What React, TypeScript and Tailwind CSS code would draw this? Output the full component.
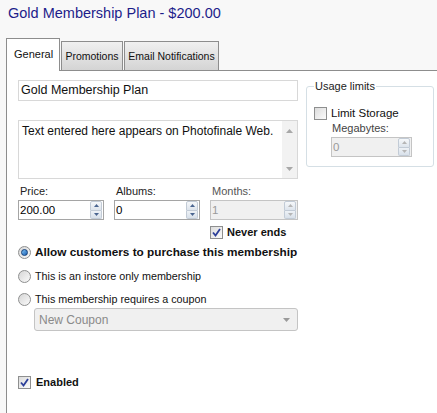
import React from 'react';

const FONT = { fontFamily: '"Liberation Sans", Arial, sans-serif' };

function Spinner({ disabled }: { disabled?: boolean }) {
  const arrow = disabled ? '#b5b5b5' : '#4a6590';
  return (
    <div className="flex flex-col w-[12px] h-[18px] mr-px">
      <div className="flex-1 flex items-center justify-center border border-[#c2cbd6] bg-gradient-to-b from-[#f6f8fa] to-[#dde4ec] rounded-t-[2px]">
        <svg width="5" height="3" viewBox="0 0 5 3"><path d="M0 3L2.5 0L5 3Z" fill={arrow} /></svg>
      </div>
      <div className="flex-1 flex items-center justify-center border border-t-0 border-[#c2cbd6] bg-gradient-to-b from-[#eef2f6] to-[#d8e0ea] rounded-b-[2px]">
        <svg width="5" height="3" viewBox="0 0 5 3"><path d="M0 0L2.5 3L5 0Z" fill={arrow} /></svg>
      </div>
    </div>
  );
}

function NumberBox({ value, width, disabled }: { value: string; width: string; disabled?: boolean }) {
  return (
    <div
      className={`flex items-center h-[20px] border ${width} ${
        disabled ? 'bg-[#f0f0f0] border-[#c4c4c4] text-[#9a9a9a]' : 'bg-white border-[#a5a5a5] text-black'
      }`}
    >
      <span className="flex-1 pl-[1px] text-[11.5px] leading-[14px]">{value}</span>
      <Spinner disabled={disabled} />
    </div>
  );
}

function Checkbox({ checked }: { checked?: boolean }) {
  return (
    <span className="flex items-center justify-center w-[13px] h-[13px] border border-[#8e8f8f] bg-gradient-to-br from-[#dcdcdc] to-[#fbfbfb] shrink-0">
      {checked && (
        <svg width="9" height="9" viewBox="0 0 9 9">
          <path d="M1 4.5L3.5 7.5L8 1" stroke="#2c3f99" strokeWidth="1.8" fill="none" />
        </svg>
      )}
    </span>
  );
}

function Radio({ checked }: { checked?: boolean }) {
  return (
    <span className="flex items-center justify-center w-[13px] h-[13px] rounded-full border border-[#8e8f8f] bg-gradient-to-br from-[#d6d6d6] to-[#fafafa] shrink-0">
      {checked && (
        <span className="w-[7px] h-[7px] rounded-full bg-gradient-to-br from-[#7fc3f3] to-[#1a5fb4] border border-[#123f7a]" />
      )}
    </span>
  );
}

export default function App() {
  return (
    <div className="w-[437px] h-[413px] bg-[#f8f8f8] overflow-hidden flex flex-col text-[#111]" style={FONT}>
      <h1 className="pl-[8px] pt-[4px] text-[14.5px] leading-[19px] text-[#1d1d8a]">Gold Membership Plan - $200.00</h1>

      <div className="flex items-end ml-[6px] mt-[15px] -mb-px relative z-10 text-[10.5px] leading-[13px]">
        <div className="w-[54px] h-[33px] bg-white border border-b-0 border-[#8d8d8d] pt-[9px] pl-[7px] text-[11px]">
          General
        </div>
        <div className="w-[62px] h-[30px] ml-px border border-[#8d8d8d] bg-gradient-to-b from-[#f0f0f0] to-[#d4d4d4] flex items-center justify-center">
          Promotions
        </div>
        <div className="w-[95px] h-[30px] ml-px border border-[#8d8d8d] bg-gradient-to-b from-[#f0f0f0] to-[#d4d4d4] flex items-center justify-center">
          Email Notifications
        </div>
      </div>

      <div className="flex-1 bg-white border-t border-l border-[#8d8d8d] ml-[6px] pl-[11px] pt-[9px] flex items-start gap-[8px]">
        <div className="w-[280px] flex flex-col">
          <div className="h-[21px] border border-[#d8d8d8] flex items-center pl-[2px] text-[12.5px]">Gold Membership Plan</div>

          <div className="mt-[19px] h-[59px] border border-[#d8d8d8] flex">
            <div className="flex-1 pl-[3px] pt-[3px] text-[12px] leading-[15px] whitespace-nowrap">Text entered here appears on Photofinale Web.</div>
            <div className="w-[15px] bg-[#f2f2f2] flex flex-col items-center justify-between pt-[8px] pb-[7px]">
              <svg width="7" height="4" viewBox="0 0 7 4"><path d="M0 4L3.5 0L7 4Z" fill="#a8a8a8" /></svg>
              <svg width="7" height="4" viewBox="0 0 7 4"><path d="M0 0L3.5 4L7 0Z" fill="#a8a8a8" /></svg>
            </div>
          </div>

          <div className="mt-[6px] flex gap-[10px] text-[11px] leading-[13px]">
            <div className="flex flex-col gap-[2px]">
              <span className="pl-[2px] text-[#222]">Price:</span>
              <NumberBox value="200.00" width="w-[86px]" />
            </div>
            <div className="flex flex-col gap-[2px]">
              <span className="pl-[2px] text-[#222]">Albums:</span>
              <NumberBox value="0" width="w-[86px]" />
            </div>
            <div className="flex flex-col gap-[2px]">
              <span className="pl-[2px] text-[#555]">Months:</span>
              <NumberBox value="1" width="w-[88px]" disabled />
              <label className="mt-[4px] flex items-center gap-[4px] font-bold">
                <Checkbox checked />
                Never ends
              </label>
            </div>
          </div>

          <label className="mt-[7px] flex items-center gap-[4px] font-bold text-[11.8px] leading-[13px] whitespace-nowrap">
            <Radio checked />
            Allow customers to purchase this membership
          </label>
          <label className="mt-[11px] flex items-center gap-[4px] text-[10.75px] leading-[13px]">
            <Radio />
            This is an instore only membership
          </label>
          <label className="mt-[10px] flex items-center gap-[4px] text-[10.75px] leading-[13px]">
            <Radio />
            This membership requires a coupon
          </label>
          <div className="mt-[2px] ml-[16px] h-[23px] border border-[#c4c4c4] rounded-[3px] bg-[#f0f0f0] flex items-center justify-between pl-[4px] pr-[7px] text-[12px] text-[#8a8a8a]">
            New Coupon
            <svg width="7" height="4" viewBox="0 0 7 4"><path d="M0 0L3.5 4L7 0Z" fill="#9a9a9a" /></svg>
          </div>

          <label className="mt-[45px] flex items-center gap-[5px] font-bold text-[11px] leading-[13px]">
            <Checkbox checked />
            Enabled
          </label>
        </div>

        <fieldset className="w-[128px] border border-[#d5dfe5] rounded-[3px] pl-[7px] pb-[9px] text-[11px] leading-[13px]">
          <legend className="px-[1px] text-[#222]">Usage limits</legend>
          <label className="mt-[14px] flex items-center gap-[4px] text-[11.5px]">
            <Checkbox />
            Limit Storage
          </label>
          <div className="ml-[18px] mt-[2px] text-[#444]">Megabytes:</div>
          <div className="ml-[17px] mt-[2px]">
            <NumberBox value="0" width="w-[81px]" disabled />
          </div>
        </fieldset>
      </div>
    </div>
  );
}
